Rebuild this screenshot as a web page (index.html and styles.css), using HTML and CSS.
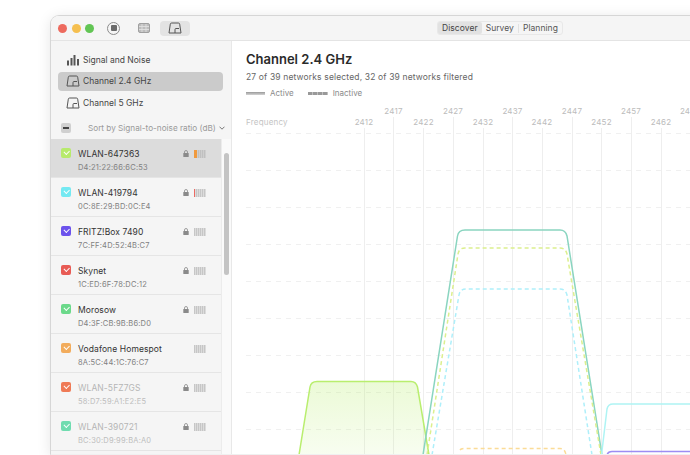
FILE: index.html
```html
<!DOCTYPE html>
<html lang="en">
<head>
<meta charset="utf-8">
<title>Channel 2.4 GHz</title>
<link rel="stylesheet" href="styles.css">
</head>
<body>
<svg class="defs" width="0" height="0" aria-hidden="true">
  <defs>
    <symbol id="i-channel" viewBox="0 0 14 12"><path d="M1 11L2.300 2.200Q2.500 1 3.600 1H10.400Q11.500 1 11.700 2.200L13 11H1Z M7 11V7.500Q7 6.500 8 6.500H11" fill="none" stroke="currentColor" stroke-width="1"/></symbol>
    <symbol id="i-bars" viewBox="0 0 14 12"><path d="M1 6.500h2v5H1z M4.500 4h2v7.500h-2z M7.500 1h2v10.500h-2z M11 5h2v6.500h-2z" fill="currentColor"/></symbol>
    <symbol id="i-lock" viewBox="0 0 6 7"><rect x="0.300" y="3" width="5.400" height="4" rx="0.600" fill="currentColor"/><path d="M1.500 3V2A1.500 1.500 0 0 1 4.500 2V3" fill="none" stroke="currentColor" stroke-width="0.800"/></symbol>
  </defs>
</svg>
<div class="window">
  <header class="titlebar">
    <div class="lights">
      <span class="light red"></span>
      <span class="light yellow"></span>
      <span class="light green"></span>
    </div>
    <span class="stop"><span class="stop-core"></span></span>
    <svg class="tool-grid" width="12" height="10" viewBox="0 0 12 10"><rect x="0.500" y="0.500" width="11" height="9" rx="1.500" fill="#bdbdbd" stroke="#a0a0a0"/><path d="M1 3.500h10M1 6.500h10M4 1v8M8 1v8" stroke="#e4e4e4" stroke-width="0.800"/></svg>
    <span class="tool-active"><svg class="icon-channel" width="14" height="12"><use href="#i-channel"/></svg></span>
    <nav class="tabs">
      <span class="tab tab-on">Discover</span>
      <span class="tab">Survey</span>
      <span class="tab-sep"></span>
      <span class="tab">Planning</span>
    </nav>
  </header>
  <div class="body">
    <aside class="sidebar">
      <div class="menu">
        <div class="menu-item"><svg class="icon-channel" width="14" height="12"><use href="#i-bars"/></svg>Signal and Noise</div>
        <div class="menu-item menu-on"><svg class="icon-channel" width="14" height="12"><use href="#i-channel"/></svg>Channel 2.4 GHz</div>
        <div class="menu-item"><svg class="icon-channel" width="14" height="12"><use href="#i-channel"/></svg>Channel 5 GHz</div>
      </div>
      <div class="sortbar">
        <span class="minus"></span>
        <span class="sort-label">Sort by Signal-to-noise ratio (dB)</span>
        <svg class="chev" width="6" height="4" viewBox="0 0 6 4"><path d="M0.500 0.700L3 3.200L5.500 0.700" fill="none" stroke="#777" stroke-width="1"/></svg>
      </div>
      <div class="listwrap">
        <ul class="list">
          <li class="row row-on">
            <span class="check c-lime"></span>
            <span class="names"><b>WLAN-647363</b><i>D4:21:22:66:6C:53</i></span>
            <svg class="lock" width="6" height="7"><use href="#i-lock"/></svg>
            <span class="meter m-orange"></span>
          </li>
          <li class="row">
            <span class="check c-cyan"></span>
            <span class="names"><b>WLAN-419794</b><i>0C:8E:29:BD:0C:E4</i></span>
            <svg class="lock" width="6" height="7"><use href="#i-lock"/></svg>
            <span class="meter m-red"></span>
          </li>
          <li class="row">
            <span class="check c-violet"></span>
            <span class="names"><b>FRITZ!Box 7490</b><i>7C:FF:4D:52:4B:C7</i></span>
            <svg class="lock" width="6" height="7"><use href="#i-lock"/></svg>
            <span class="meter"></span>
          </li>
          <li class="row">
            <span class="check c-red"></span>
            <span class="names"><b>Skynet</b><i>1C:ED:6F:78:DC:12</i></span>
            <svg class="lock" width="6" height="7"><use href="#i-lock"/></svg>
            <span class="meter"></span>
          </li>
          <li class="row">
            <span class="check c-green"></span>
            <span class="names"><b>Morosow</b><i>D4:3F:CB:9B:B6:D0</i></span>
            <svg class="lock" width="6" height="7"><use href="#i-lock"/></svg>
            <span class="meter"></span>
          </li>
          <li class="row">
            <span class="check c-amber"></span>
            <span class="names"><b>Vodafone Homespot</b><i>8A:5C:44:1C:76:C7</i></span>
            <span class="meter"></span>
          </li>
          <li class="row row-dim">
            <span class="check c-coral"></span>
            <span class="names"><b>WLAN-5FZ7GS</b><i>58:D7:59:A1:E2:E5</i></span>
            <svg class="lock" width="6" height="7"><use href="#i-lock"/></svg>
            <span class="meter"></span>
          </li>
          <li class="row row-dim">
            <span class="check c-mint"></span>
            <span class="names"><b>WLAN-390721</b><i>BC:30:D9:99:BA:A0</i></span>
            <svg class="lock" width="6" height="7"><use href="#i-lock"/></svg>
            <span class="meter"></span>
          </li>
        </ul>
        <div class="scrolltrack"><span class="scrollthumb"></span></div>
      </div>
    </aside>
    <main class="main">
      <h1 class="title">Channel 2.4 GHz</h1>
      <p class="subtitle">27 of 39 networks selected, 32 of 39 networks filtered</p>
      <div class="legend">
        <span class="swatch"></span><span class="legend-label">Active</span>
        <span class="swatch swatch-dash"></span><span class="legend-label">Inactive</span>
      </div>
      <svg class="chart" width="459" height="359" viewBox="232 96 459 359">
        <defs>
          <linearGradient id="limefill" x1="0" y1="0" x2="0" y2="1">
            <stop offset="0" stop-color="#b9ee6e" stop-opacity="0.280"/>
            <stop offset="1" stop-color="#b9ee6e" stop-opacity="0.100"/>
          </linearGradient>
        </defs>
        <g class="hgrid">
          <path d="M246 133.500H690M246 170.500H690M246 207.500H690M246 244.500H690M246 281.500H690M246 318.500H690M246 355.500H690M246 392.500H690M246 429.500H690"/>
        </g>
        <g class="vgrid">
          <path d="M364.500 128V455M393.500 117V455M423.500 128V455M453.500 117V455M483.500 128V455M512.500 117V455M542.500 128V455M572.500 117V455M601.500 128V455M631.500 117V455M661.500 128V455"/>
        </g>
        <g class="labels">
          <text x="246" y="125" class="freq">Frequency</text>
          <text x="364" y="125" text-anchor="middle">2412</text>
          <text x="393.500" y="114" text-anchor="middle">2417</text>
          <text x="423.500" y="125" text-anchor="middle">2422</text>
          <text x="453" y="114" text-anchor="middle">2427</text>
          <text x="483" y="125" text-anchor="middle">2432</text>
          <text x="512.500" y="114" text-anchor="middle">2437</text>
          <text x="542" y="125" text-anchor="middle">2442</text>
          <text x="572" y="114" text-anchor="middle">2447</text>
          <text x="601.500" y="125" text-anchor="middle">2452</text>
          <text x="631" y="114" text-anchor="middle">2457</text>
          <text x="661" y="125" text-anchor="middle">2462</text>
          <text x="690" y="114" text-anchor="middle">2467</text>
        </g>
        <path d="M299 455L310 387Q311 381.500 317 381.500H411Q416 381.500 417.500 387L429 455" fill="url(#limefill)" stroke="#b9ee6e" stroke-width="1.500"/>
        <path d="M423 455L457.500 236Q458.500 230 465 230H560Q565.500 230 567 236L602 455" fill="none" stroke="#8ad5c0" stroke-width="1.500"/>
        <path d="M427 455L458 254Q459 248 465 248H560Q565.500 248 567 254L601 455" fill="none" stroke="#dcef8e" stroke-width="1.500" stroke-dasharray="4 3"/>
        <path d="M432 455L459 295Q460 289 466 289H560Q565.500 289 567 295L592 455" fill="none" stroke="#aeeffa" stroke-width="1.500" stroke-dasharray="4 3"/>
        <path d="M460 450Q461 448.500 465 448.500H560Q565 448.500 566 455" fill="none" stroke="#fbdc97" stroke-width="1.500" stroke-dasharray="4 3"/>
        <path d="M601.500 455L607 409Q608 404 613 404H690" fill="none" stroke="#aef4f4" stroke-width="1.500"/>
        <path d="M607 455Q608 451.500 612 451.500H690" fill="none" stroke="#9d8cf3" stroke-width="1.500"/>
      </svg>
    </main>
  </div>
</div>
</body>
</html>
```

FILE: styles.css
```css
* { box-sizing: border-box; margin: 0; padding: 0; }
html, body { width: 690px; height: 455px; overflow: hidden; background: #fff; }
body { padding: 15px 0 0 50px; font-family: Inter, "Liberation Sans", sans-serif; color: #333; }
.defs { display: block; height: 0; }
.window {
  width: 660px;
  height: 440px;
  border: 1px solid #d6d6d6;
  border-bottom-color: #f0f0f0;
  border-radius: 9px 0 0 0;
  background: #fff;
  box-shadow: 0 2px 14px rgba(0,0,0,.1);
  overflow: hidden;
}
.titlebar {
  display: flex;
  align-items: center;
  height: 25px;
  padding-left: 7px;
  background: #f5f5f5;
  border-bottom: 1px solid #e4e4e4;
}
.lights { display: flex; gap: 4.500px; }
.light { width: 9px; height: 9px; border-radius: 50%; }
.red { background: #ed6a5e; }
.yellow { background: #f5bf4f; }
.green { background: #62c554; }
.stop {
  display: flex; align-items: center; justify-content: center;
  width: 13px; height: 13px; margin-left: 13px;
  border: 1px solid #8c8c8c; border-radius: 50%;
}
.stop-core { width: 6px; height: 6px; border-radius: 1px; background: #6a6a6a; }
.tool-grid { margin-left: 18px; }
.tool-active {
  display: flex; align-items: center; justify-content: center;
  width: 30px; height: 15px; margin-left: 10px;
  border-radius: 4px; background: #e3e3e3; color: #666;
}
.tabs {
  display: flex; align-items: center;
  height: 14px; margin-left: 247px;
  border: 1px solid #e8e8e8; border-radius: 3px;
  font-size: 8.500px; color: #555;
}
.tab { padding: 0 4px; line-height: 12px; letter-spacing: 0.050px; }
.tab-on { background: #e2e2e2; border-radius: 2px; color: #444; }
.tab-sep { width: 1px; height: 9px; background: #e2e2e2; }
.body { display: flex; height: 413px; }
.sidebar {
  display: flex; flex-direction: column;
  width: 181px; flex: none;
  background: #f5f5f5;
  border-right: 1px solid #e8e8e8;
}
.menu { display: flex; flex-direction: column; gap: 2px; padding: 9px 8px 0 7px; }
.menu-item {
  display: flex; align-items: center; gap: 3px;
  height: 19.500px; padding-left: 8px;
  border-radius: 4px;
  font-size: 8.500px; color: #444;
}
.menu-on { background: #cbcbcb; }
.icon-channel { color: #555; flex: none; }
.sortbar {
  display: flex; align-items: center;
  height: 26.500px; padding: 4px 0 0 10px;
  font-size: 8.200px; color: #9a9a9a;
}
.minus {
  display: flex; align-items: center; justify-content: center;
  width: 10px; height: 10px; flex: none;
  border-radius: 2px; background: #d0d0d0;
}
.minus::before { content: ""; width: 6px; height: 1.500px; background: #444; }
.sort-label { margin-left: 17px; white-space: nowrap; }
.chev { margin-left: 3px; flex: none; }
.listwrap { display: flex; flex: 1; min-height: 0; }
.list { list-style: none; width: 170px; flex: none; }
.row {
  display: flex; align-items: flex-start;
  height: 39px; padding: 9px 15px 0 10px;
  border-bottom: 1px solid #e5e5e5;
}
.row-on { background: #dcdcdc; }
.check {
  position: relative; width: 10px; height: 10px; flex: none;
  border-radius: 2px;
}
.check::after {
  content: ""; position: absolute; left: 2.800px; top: 2px;
  width: 4px; height: 2.500px;
  border-left: 1px solid #fff; border-bottom: 1px solid #fff;
  transform: rotate(-45deg);
}
.c-lime { background: #b7ea6c; }
.c-cyan { background: #74e9f2; }
.c-violet { background: #6c53ec; }
.c-red { background: #e85b55; }
.c-green { background: #6bd98a; }
.c-amber { background: #f2ac5c; }
.c-coral { background: #ef7a56; }
.c-mint { background: #70dcb0; }
.names { display: flex; flex-direction: column; flex: 1; margin-left: 7px; padding-top: 1px; min-width: 0; }
.names b { font-weight: 400; font-size: 8.500px; line-height: 10px; color: #333; white-space: nowrap; letter-spacing: 0.100px; }
.names i { font-style: normal; font-size: 7.500px; line-height: 10px; margin-top: 3.500px; color: #808080; white-space: nowrap; letter-spacing: 0.200px; }
.row-dim b { color: #b5b5b5; }
.row-dim i { color: #bdbdbd; }
.lock { color: #8a8a8a; margin: 1.500px 5px 0 0; flex: none; }
.meter {
  width: 12px; height: 8px; margin-top: 2px; flex: none;
  background: repeating-linear-gradient(90deg, #c6c6c6 0, #c6c6c6 1px, #dcdcdc 1px, #dcdcdc 2px);
}
.m-orange { background: linear-gradient(90deg, #f09a3e 0, #f09a3e 3px, transparent 3px), repeating-linear-gradient(90deg, #c0c0c0 0, #c0c0c0 1px, #cecece 1px, #cecece 2px); }
.m-red { background: linear-gradient(90deg, #ec6a62 0, #ec6a62 1px, transparent 1px), repeating-linear-gradient(90deg, #c6c6c6 0, #c6c6c6 1px, #dcdcdc 1px, #dcdcdc 2px); }
.scrolltrack { flex: 1; position: relative; background: #fafafa; border-left: 1px solid #ececec; }
.scrollthumb {
  position: absolute; left: 2px; top: 14px;
  width: 5px; height: 122px; border-radius: 3px; background: #c4c4c4;
}
.main { flex: 1; padding: 9px 0 0 14px; min-width: 0; position: relative; overflow: hidden; }
.title { font-size: 13px; font-weight: 600; line-height: 18px; color: #2a2a2a; }
.subtitle { margin-top: 4px; font-size: 8.500px; line-height: 11px; color: #666; white-space: nowrap; letter-spacing: 0.150px; }
.legend { display: flex; align-items: center; height: 10px; margin-top: 5px; font-size: 8px; color: #8a8a8a; }
.swatch { width: 19px; height: 3px; background: linear-gradient(#999, #d4d4d4); }
.swatch-dash { margin-left: 14px; width: 20px; background: repeating-linear-gradient(90deg, #999 0, #999 4px, #c0c0c0 4px, #c0c0c0 5px); }
.legend-label { margin-left: 5px; }
.chart { position: absolute; left: 0; top: 55px; }
.hgrid path { stroke: #f0f0f0; stroke-width: 1; stroke-dasharray: 5 5; fill: none; }
.vgrid path { stroke: #eeeeee; stroke-width: 1; fill: none; }
.labels text { font-size: 8px; fill: #bcbcbc; letter-spacing: 0.200px; }
.labels .freq { fill: #c4c4c4; }
```
